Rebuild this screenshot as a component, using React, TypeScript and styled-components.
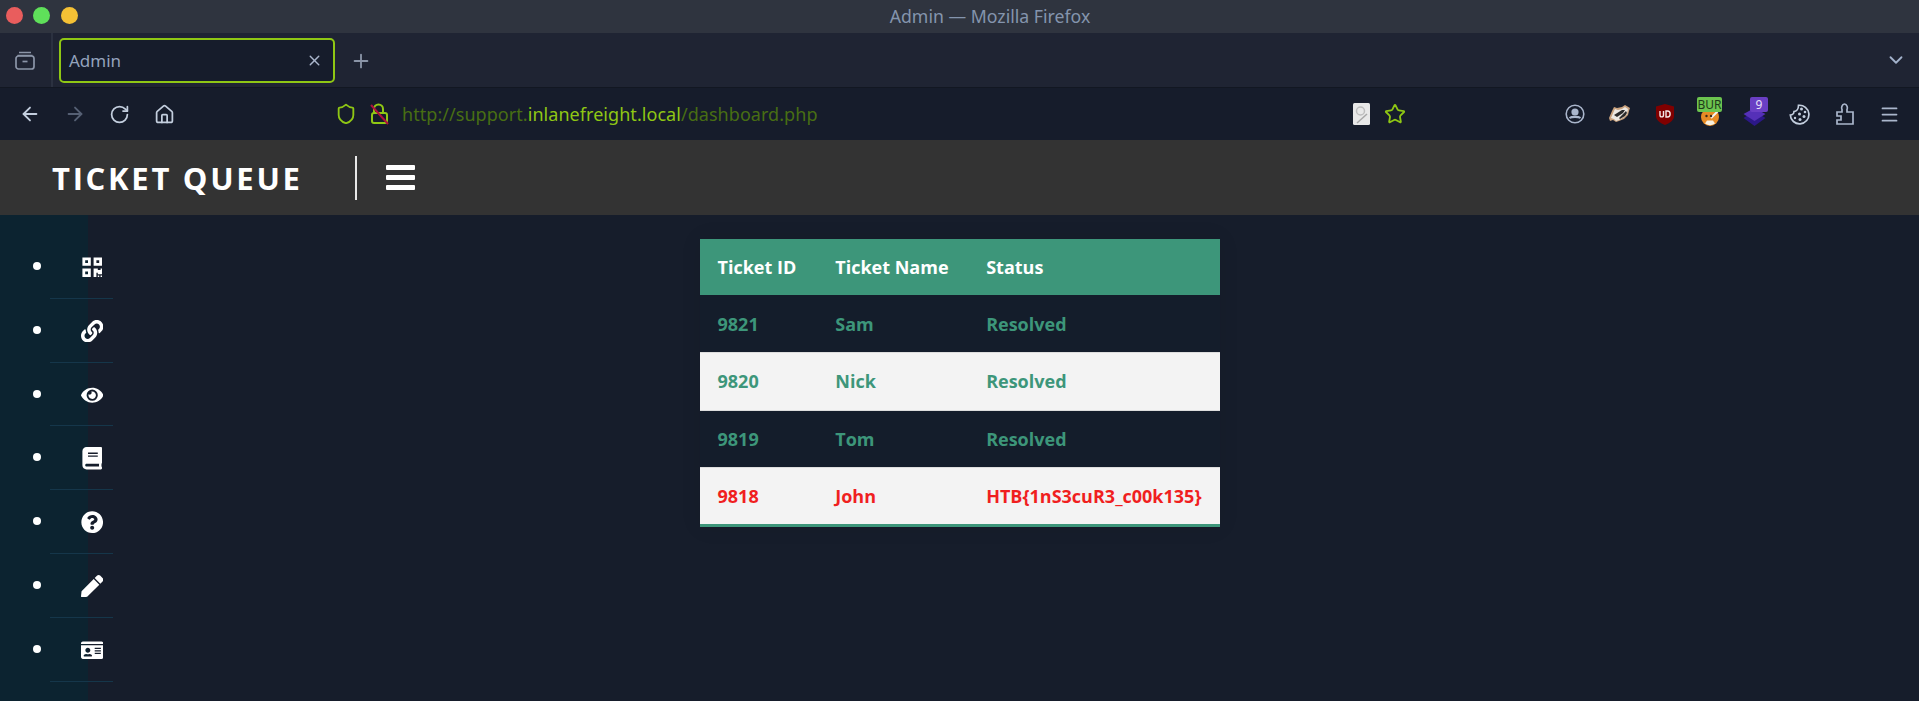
import React from "react";
import styled, { createGlobalStyle } from "styled-components";
import {
  FaQrcode,
  FaLink,
  FaEye,
  FaBook,
  FaQuestionCircle,
  FaPen,
  FaIdCard,
} from "react-icons/fa";
import {
  ArrowLeft,
  ArrowRight,
  ChevronDown,
  Home,
  Menu,
  Plus,
  RotateCw,
  Shield,
  Star,
  X,
} from "lucide-react";

const GlobalStyle = createGlobalStyle`
  html, body {
    margin: 0;
    padding: 0;
    height: 100%;
    background: #161d2b;
    overflow: hidden;
  }
  #root {
    height: 100%;
  }
`;

const Page = styled.div`
  display: flex;
  flex-direction: column;
  height: 701px;
  font-family: "Open Sans", sans-serif;
`;

const TitleBar = styled.div`
  display: flex;
  align-items: center;
  position: relative;
  box-sizing: border-box;
  height: 33px;
  padding-bottom: 2px;
  background: #2f343f;
`;

const WindowDots = styled.div`
  display: flex;
  gap: 10.5px;
  padding-left: 5.5px;
`;

const Dot = styled.span<{ $color: string }>`
  width: 17px;
  height: 17px;
  border-radius: 50%;
  background: ${(p) => p.$color};
`;

const WindowTitle = styled.div`
  position: absolute;
  left: 61px;
  right: 0;
  text-align: center;
  font-family: "Noto Sans", sans-serif;
  font-size: 17.7px;
  color: #8494ad;
`;

const TabStrip = styled.div`
  display: flex;
  align-items: center;
  height: 55px;
  background: #1f2433;
  border-bottom: 1px solid #121722;
  box-sizing: border-box;
`;

const TabsButton = styled.div`
  display: flex;
  align-items: center;
  justify-content: center;
  box-sizing: border-box;
  width: 53px;
  height: 100%;
  padding-right: 2px;
  border-right: 2px solid #2b3140;
  margin-right: 6px;
`;

const Tab = styled.div`
  display: flex;
  align-items: center;
  justify-content: space-between;
  box-sizing: border-box;
  width: 276px;
  height: 45px;
  padding: 1px 10px 0 8px;
  background: #161c2b;
  border: 2px solid #8fc714;
  border-radius: 5px;
  font-family: "Noto Sans", sans-serif;
  font-size: 17px;
  color: #94a3bd;
`;

const NewTab = styled.div`
  display: flex;
  margin: 2px 0 0 15px;
  color: #8b95a8;
`;

const StripEnd = styled.div`
  display: flex;
  margin-left: auto;
  margin-right: 12px;
  color: #a3b2cc;
`;

const NavBar = styled.div`
  display: flex;
  align-items: center;
  height: 52px;
  padding: 0 7px;
  background: #161c2b;
`;

const NavSlot = styled.div<{ $dim?: boolean }>`
  display: flex;
  align-items: center;
  justify-content: center;
  position: relative;
  flex: none;
  width: 45px;
  height: 30px;
  color: ${(p) => (p.$dim ? "#566074" : "#c3cede")};
`;

const SiteIdentity = styled.div`
  display: flex;
  align-items: center;
  gap: 13px;
  margin-left: 148px;
  margin-right: 12px;
  color: #8fc714;
`;

const Url = styled.div`
  font-family: "Noto Sans", sans-serif;
  font-size: 18px;
  letter-spacing: 0.05px;
  color: #486e13;
  white-space: nowrap;
`;

const UrlHost = styled.span`
  color: #8fc714;
`;

const UrlActions = styled.div`
  display: flex;
  align-items: center;
  gap: 14px;
  margin-left: 535px;
  margin-right: auto;
`;

const Extensions = styled.div`
  display: flex;
  align-items: center;
`;

const BadgedIcon = styled.div`
  display: flex;
  padding-top: 6px;
`;

const ExtensionBadge = styled.span<{ $left: number; $width: number; $bg: string; $fg: string }>`
  position: absolute;
  top: -2px;
  left: ${(p) => p.$left}px;
  width: ${(p) => p.$width}px;
  height: 15px;
  border-radius: 2px;
  background: ${(p) => p.$bg};
  color: ${(p) => p.$fg};
  font-family: "Noto Sans", sans-serif;
  font-size: 12px;
  line-height: 15px;
  text-align: center;
  white-space: nowrap;
`;

const AppHeader = styled.header`
  display: flex;
  align-items: center;
  height: 75px;
  padding-left: 52px;
  background: #333333;
  color: #ffffff;
`;

const Brand = styled.div`
  width: 303px;
  font-size: 31px;
  font-weight: 700;
  letter-spacing: 2.7px;
  white-space: nowrap;
`;

const HeaderRule = styled.div`
  width: 2px;
  height: 44px;
  background: #e8e8e8;
`;

const Burger = styled.div`
  display: flex;
  flex-direction: column;
  gap: 5px;
  width: 29px;
  margin-left: 29px;
`;

const BurgerBar = styled.span`
  height: 5px;
  background: #ffffff;
  border-radius: 1px;
`;

const Content = styled.div`
  display: flex;
  flex: 1;
  min-height: 0;
`;

const Sidebar = styled.ul`
  flex: none;
  box-sizing: border-box;
  width: 88px;
  margin: 0;
  padding: 20px 0 0 56px;
  background: #0c2330;
  color: #ffffff;
  list-style: disc;
`;

const SideItem = styled.li`
  height: 63.8px;
  font-size: 22px;
  line-height: 60px;
`;

const SideIcon = styled.span`
  display: block;
  box-sizing: border-box;
  width: 63px;
  height: 63.8px;
  margin-left: -6px;
  padding: 21px 0 0 31px;
  border-bottom: 1px solid #15364a;

  svg {
    display: block;
  }
`;

const Main = styled.main`
  flex: 1;
  display: flex;
  justify-content: center;
  align-items: flex-start;
  padding: 24px 88px 0 0;
`;

const TicketTable = styled.table`
  width: 520px;
  border-collapse: collapse;
  box-shadow: 0 0 20px rgba(0, 0, 0, 0.08);
  font-size: 18px;
  font-weight: 700;
  color: #3d967a;
  background: #141d2b;
`;

const HeadRow = styled.tr`
  height: 56px;
  background: #3d967a;
  color: #ffffff;
  text-align: left;
`;

const Row = styled.tr<{ $alert?: boolean }>`
  height: 57.5px;
  border-bottom: 1px solid #dddddd;
  color: ${(p) => (p.$alert ? "#f01f1f" : "#3d967a")};

  &:nth-of-type(even) {
    background: #f3f3f3;
  }

  &:last-of-type {
    border-bottom: 3px solid #3d967a;
  }
`;

const Cell = styled.td`
  padding: 0 18px;
  white-space: nowrap;
`;

const HeadCell = styled.th<{ $width?: number }>`
  width: ${(p) => (p.$width ? `${p.$width}px` : "auto")};
  box-sizing: border-box;
  padding: 0 18px;
  white-space: nowrap;
`;

const TabsIcon = () => (
  <svg width="22" height="22" viewBox="0 0 22 22" fill="none" stroke="#8b95a8" strokeWidth="1.7">
    <path d="M5 3.5h12M3.5 6.5h15" />
    <rect x="2" y="7" width="18" height="13" rx="2.5" />
    <path d="M8.5 12.5h5" />
  </svg>
);

const InsecureLock = () => (
  <svg width="20" height="24" viewBox="0 0 20 24" fill="none">
    <path d="M4 11V7a4.5 4.5 0 0 1 9 0v4" stroke="#8fc714" strokeWidth="2" />
    <rect x="2" y="11" width="15" height="10" rx="2" stroke="#8fc714" strokeWidth="2" />
    <path d="M1 3l17 19" stroke="#b0123d" strokeWidth="2" />
  </svg>
);

const PageNote = () => (
  <svg width="17" height="22" viewBox="0 0 17 22">
    <rect width="17" height="22" rx="1.5" fill="#e8e8e8" />
    <circle cx="7.5" cy="8" r="4" fill="none" stroke="#bdbdbd" strokeWidth="1.5" />
    <path d="M4 20L14 11" stroke="#a8a8a8" strokeWidth="1.5" />
  </svg>
);

const AccountIcon = () => (
  <svg width="20" height="20" viewBox="0 0 20 20" fill="none" stroke="#aab6cc" strokeWidth="1.6">
    <circle cx="10" cy="10" r="8.8" />
    <circle cx="10" cy="8" r="2.8" fill="#aab6cc" />
    <path d="M4.5 14c2-1.6 9-1.600 11 0" strokeWidth="2.2" />
  </svg>
);

const BadgerIcon = () => (
  <svg width="21" height="18" viewBox="0 0 21 18">
    <path d="M0 13L3 6l2-4 3 1 5-1 3-2 5 3-1 3-1 4-4 4-5 2-3 1-3-2-3 1z" fill="#c9a27e" />
    <path d="M2 13l3-7 1-2 3 1 4-1 3-2 3 2-1 5-3 3-5 3-3 1-2-2z" fill="#ece8e2" />
    <path d="M5 10l8-5 3 0-2 3-6 4zM10 13l7-7 1 2-2 3-5 3z" fill="#2b2a2a" />
  </svg>
);

const UblockIcon = () => (
  <svg width="18" height="21" viewBox="0 0 18 21">
    <path d="M9 0l9 2.500v9.500c0 4-4.500 7.500-9 9-4.500-1.500-9-5-9-9V2.500z" fill="#800000" />
    <path d="M4 7v4c0 2.500 3.500 2.500 3.500 0V7M10 7v6h1.500c3.500 0 3.500-6 0-6z" fill="none" stroke="#f4e8e8" strokeWidth="1.400" />
  </svg>
);

const TigerIcon = () => (
  <svg width="20" height="18" viewBox="0 0 20 18">
    <circle cx="10" cy="9" r="9" fill="#e88b25" />
    <path d="M5 15.500a9 9 0 0 0 10 0l-2-3H7z" fill="#f7f0e0" />
    <path d="M11 10l7-7" stroke="#f4f4f4" strokeWidth="2" />
    <circle cx="6.500" cy="8" r="1.200" fill="#3a2a18" />
    <circle cx="11" cy="8" r="1.200" fill="#3a2a18" />
  </svg>
);

const PurpleBlock = () => (
  <svg width="23" height="18" viewBox="0 0 23 18">
    <path d="M11.500 3l11 7-11 8-11-8z" fill="#2c1888" />
    <path d="M11.500 0l11 6-11 7-11-7z" fill="#5530b8" />
  </svg>
);

const CookieIcon = () => (
  <svg width="21" height="21" viewBox="0 0 21 21" fill="none" stroke="#c3cede" strokeWidth="1.7">
    <path d="M9.500 1.300A9.300 9.300 0 1 1 1.300 11C3.500 11 5 9.500 5 7.500 7.500 7.500 9.500 5 9.500 1.300z" />
    <g fill="#c3cede" stroke="none">
      <circle cx="12.500" cy="5" r="1.500" />
      <circle cx="16" cy="8" r="1.300" />
      <circle cx="10.500" cy="10" r="1.500" />
      <circle cx="15" cy="12.500" r="1.500" />
      <circle cx="11" cy="15.500" r="1.500" />
      <circle cx="6" cy="14" r="1.200" />
    </g>
  </svg>
);

const PuzzleIcon = () => (
  <svg width="18" height="22" viewBox="0 0 18 22" fill="none" stroke="#aab6cc" strokeWidth="1.700">
    <path d="M1 9h5V6.500C5 5 6 1 8.500 1S12 5 11 6.500V9h6v12H1v-4h4v-4H1z" />
  </svg>
);

const sideIcons = [FaQrcode, FaLink, FaEye, FaBook, FaQuestionCircle, FaPen, FaIdCard];

const tickets = [
  { id: "9821", name: "Sam", status: "Resolved" },
  { id: "9820", name: "Nick", status: "Resolved" },
  { id: "9819", name: "Tom", status: "Resolved" },
  { id: "9818", name: "John", status: "HTB{1nS3cuR3_c00k135}", alert: true },
];

const App = () => {
  return (
    <Page>
      <GlobalStyle />
      <TitleBar>
        <WindowDots>
          <Dot $color="#e95d5d" />
          <Dot $color="#5fe05a" />
          <Dot $color="#f5c135" />
        </WindowDots>
        <WindowTitle>Admin — Mozilla Firefox</WindowTitle>
      </TitleBar>

      <TabStrip>
        <TabsButton>
          <TabsIcon />
        </TabsButton>
        <Tab>
          Admin
          <X size={17} color="#aab6cc" />
        </Tab>
        <NewTab>
          <Plus size={22} />
        </NewTab>
        <StripEnd>
          <ChevronDown size={22} />
        </StripEnd>
      </TabStrip>

      <NavBar>
        <NavSlot>
          <ArrowLeft size={22} />
        </NavSlot>
        <NavSlot $dim>
          <ArrowRight size={22} />
        </NavSlot>
        <NavSlot>
          <RotateCw size={21} />
        </NavSlot>
        <NavSlot>
          <Home size={21} />
        </NavSlot>
        <SiteIdentity>
          <Shield size={22} />
          <InsecureLock />
        </SiteIdentity>
        <Url>
          http://support.<UrlHost>inlanefreight.local</UrlHost>/dashboard.php
        </Url>
        <UrlActions>
          <PageNote />
          <Star size={22} color="#8fc714" />
        </UrlActions>
        <Extensions>
          <NavSlot>
            <AccountIcon />
          </NavSlot>
          <NavSlot>
            <BadgerIcon />
          </NavSlot>
          <NavSlot>
            <UblockIcon />
          </NavSlot>
          <NavSlot>
            <BadgedIcon>
              <TigerIcon />
            </BadgedIcon>
            <ExtensionBadge $left={10} $width={25} $bg="#6cc44f" $fg="#1f3a1a">BUR</ExtensionBadge>
          </NavSlot>
          <NavSlot>
            <BadgedIcon>
              <PurpleBlock />
            </BadgedIcon>
            <ExtensionBadge $left={18} $width={18} $bg="#6a3fc4" $fg="#e8e0f8">9</ExtensionBadge>
          </NavSlot>
          <NavSlot>
            <CookieIcon />
          </NavSlot>
          <NavSlot>
            <PuzzleIcon />
          </NavSlot>
          <NavSlot>
            <Menu size={21} color="#aab6cc" />
          </NavSlot>
        </Extensions>
      </NavBar>

      <AppHeader>
        <Brand>TICKET QUEUE</Brand>
        <HeaderRule />
        <Burger>
          <BurgerBar />
          <BurgerBar />
          <BurgerBar />
        </Burger>
      </AppHeader>

      <Content>
        <Sidebar>
          {sideIcons.map((Icon, i) => (
            <SideItem key={i}>
              <SideIcon>
                <Icon size={22.4} />
              </SideIcon>
            </SideItem>
          ))}
        </Sidebar>
        <Main>
          <TicketTable>
            <thead>
              <HeadRow>
                <HeadCell $width={118}>Ticket ID</HeadCell>
                <HeadCell $width={151}>Ticket Name</HeadCell>
                <HeadCell>Status</HeadCell>
              </HeadRow>
            </thead>
            <tbody>
              {tickets.map((t) => (
                <Row key={t.id} $alert={t.alert}>
                  <Cell>{t.id}</Cell>
                  <Cell>{t.name}</Cell>
                  <Cell>{t.status}</Cell>
                </Row>
              ))}
            </tbody>
          </TicketTable>
        </Main>
      </Content>
    </Page>
  );
};

export default App;
